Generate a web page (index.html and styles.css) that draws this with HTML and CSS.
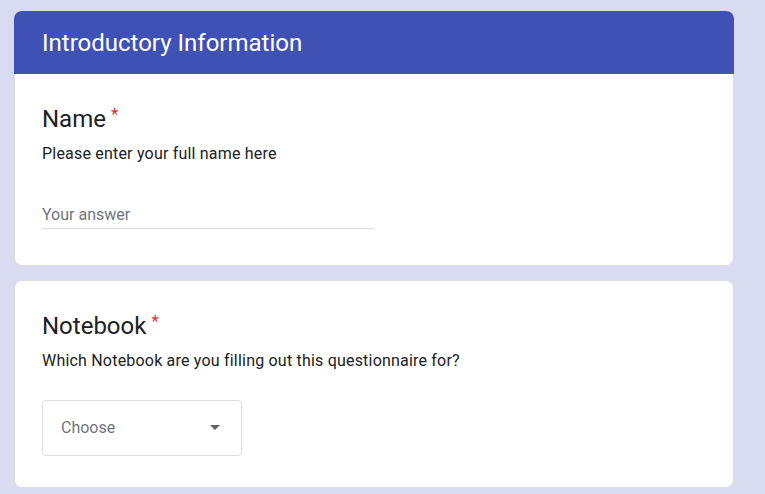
FILE: index.html
```html
<!DOCTYPE html>
<html>
<head>
<meta charset="utf-8">
<link rel="stylesheet" href="styles.css">
</head>
<body>
<div class="page">
  <section class="card first">
    <div class="header">Introductory Information</div>
    <div class="body">
      <div class="q-title">Name<span class="req">*</span></div>
      <div class="q-desc">Please enter your full name here</div>
      <div class="answer">Your answer</div>
    </div>
  </section>
  <section class="card">
    <div class="body">
      <div class="q-title">Notebook<span class="req">*</span></div>
      <div class="q-desc">Which Notebook are you filling out this questionnaire for?</div>
      <div class="select">
        <span class="select-text">Choose</span>
        <svg class="arrow" width="10" height="5" viewBox="0 0 10 5"><path d="M0 0 L10 0 L5 5 Z" fill="#5f6368"/></svg>
      </div>
    </div>
  </section>
</div>
</body>
</html>
```
FILE: styles.css
```css
html, body {
  margin: 0;
  padding: 0;
  background: #d9dbf1;
  font-family: Roboto, "Liberation Sans", Arial, sans-serif;
  color: #202124;
}
.page {
  display: flex;
  flex-direction: column;
  gap: 14px;
  width: 720px;
  margin-left: 14px;
  padding-top: 11px;
}
.card {
  background: #fff;
  border: 1px solid #dadce0;
  border-radius: 8px;
}
.card.first {
  border: none;
  background: transparent;
}
.header {
  background: #3f51b5;
  color: #fff;
  font-size: 24px;
  line-height: 32px;
  height: 63px;
  box-sizing: border-box;
  padding: 16px 28px 0;
  border-radius: 8px 8px 0 0;
}
.card.first .body {
  background: #fff;
  border: 1px solid #dadce0;
  border-top: none;
  border-radius: 0 0 8px 8px;
  padding-top: 29px;
  padding-bottom: 36px;
}
.body {
  padding: 29px 27px 31px;
}
.q-title {
  font-size: 24px;
  line-height: 32px;
}
.req {
  color: #d93025;
  font-size: 17px;
  vertical-align: top;
  position: relative;
  top: -5px;
  padding-left: 5px;
}
.q-desc {
  font-size: 16px;
  line-height: 24px;
  letter-spacing: 0.2px;
  margin-top: 7px;
}
.answer {
  margin-top: 37px;
  width: 332px;
  font-size: 16px;
  line-height: 24px;
  color: #70757a;
  padding-bottom: 1px;
  border-bottom: 1px solid #dcdcdc;
}
.select {
  margin-top: 27px;
  width: 200px;
  height: 56px;
  box-sizing: border-box;
  border: 1px solid #dadce0;
  border-radius: 4px;
  display: flex;
  align-items: center;
  justify-content: space-between;
  padding: 0 21px 2px 18px;
}
.select-text {
  font-size: 16px;
  color: #70757a;
}
.arrow {
  display: block;
}
```
